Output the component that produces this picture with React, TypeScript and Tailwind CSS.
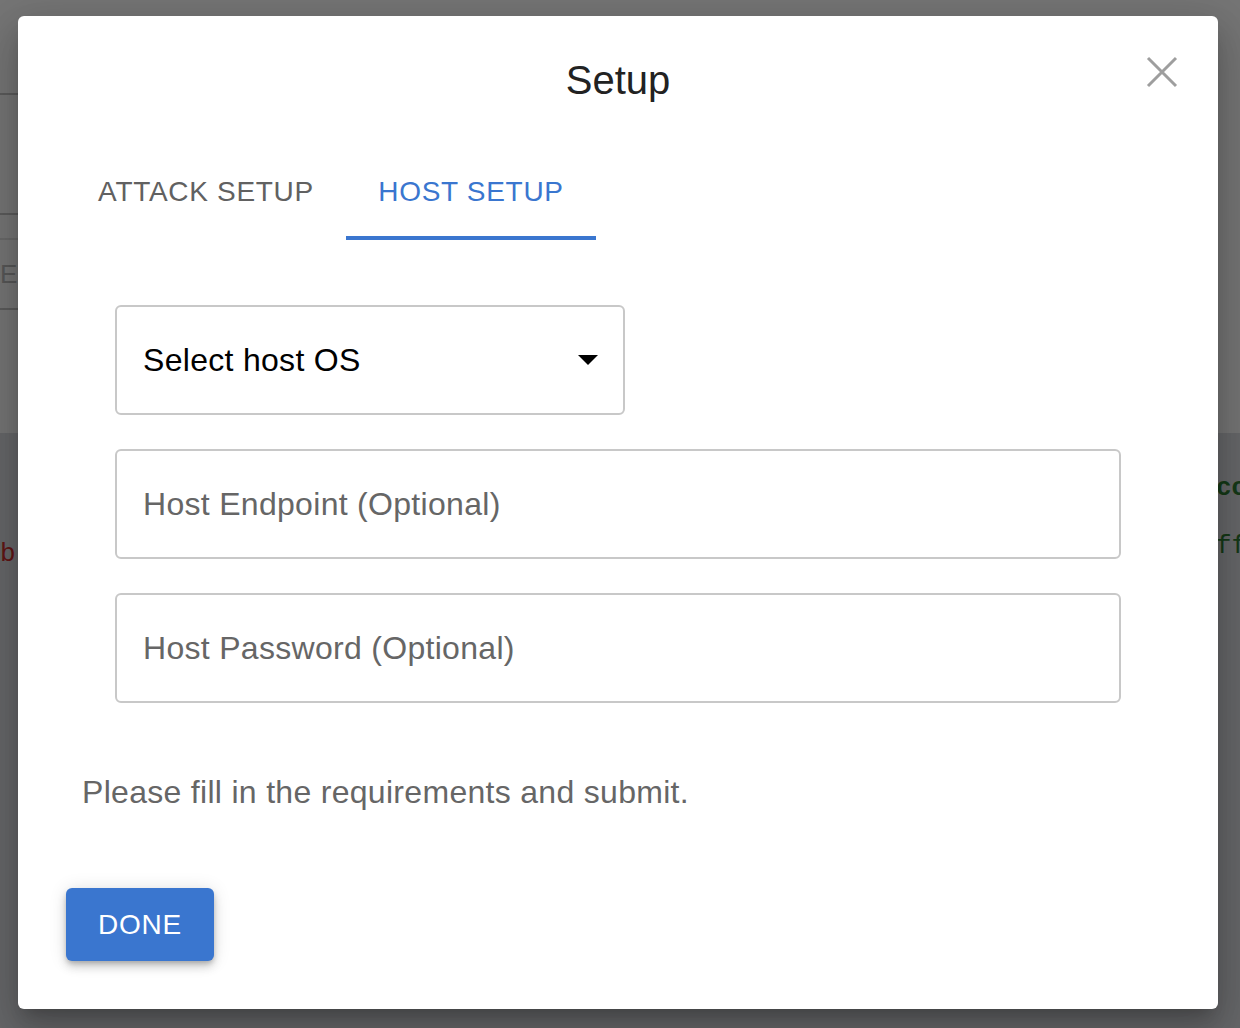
import { useState } from 'react'

const tabs = [
  { id: 'attack', label: 'ATTACK SETUP', width: 'w-[280px]' },
  { id: 'host', label: 'HOST SETUP', width: 'w-[250px]' },
]

const CloseIcon = () => (
  <svg width="40" height="40" viewBox="0 0 40 40" fill="none">
    <path d="M6 6 L34 34 M34 6 L6 34" stroke="#9e9e9e" strokeWidth="3" />
  </svg>
)

const BackgroundPage = () => (
  <div className="flex h-full flex-col">
    <div className="relative h-[433px] bg-white">
      <div className="w-[600px]">
        <div className="h-[95px] border-b-2 border-[#c6c6c6]" />
        <div className="h-[120px] border-b-2 border-[#c6c6c6]" />
        <div className="h-[25px] border-b-2 border-[#e4e4e4]" />
        <div className="flex h-[70px] items-center border-b-2 border-[#c6c6c6] text-[26px] text-[#bdbdbd]">
          <span>EN</span>
        </div>
      </div>
    </div>
    <div className="flex flex-1 justify-between bg-[#dfe0e5]">
      <div className="pt-[102px] font-['Liberation_Mono',monospace] text-[26px] text-[#d32f2f]">b</div>
      <div className="flex w-[24px] flex-col overflow-hidden pt-[40px] font-['Liberation_Mono',monospace] text-[26px] leading-[30px] text-[#2e7d32]">
        <span className="font-bold">co</span>
        <span className="mt-[28px]">ff</span>
      </div>
    </div>
  </div>
)

const OutlinedField = ({ placeholder }: { placeholder: string }) => (
  <div className="flex h-[110px] w-full items-center rounded-md border-2 border-[#c8c8c8] pl-[26px] text-[32px] tracking-[0.3px] text-[#666666]">
    {placeholder}
  </div>
)

export default function App() {
  const [activeTab, setActiveTab] = useState('host')

  return (
    <div className="relative h-screen w-full overflow-hidden font-['Liberation_Sans',Arial,sans-serif]">
      <BackgroundPage />
      <div className="absolute inset-0 bg-black/[0.54]" />

      <div className="absolute inset-0 flex items-start pl-[18px] pt-4">
        <div className="relative flex h-[993px] w-[1200px] flex-col rounded-md bg-white px-12 shadow-[0_11px_15px_-7px_rgba(0,0,0,0.2),0_24px_38px_3px_rgba(0,0,0,0.14),0_9px_46px_8px_rgba(0,0,0,0.12)]">
          <button className="absolute right-[36px] top-[36px]" aria-label="close">
            <CloseIcon />
          </button>

          <h2 className="mt-10 text-center text-[40px] leading-[48px] text-[#222222]">Setup</h2>

          <div className="mt-10 flex">
            {tabs.map(tab => {
              const active = tab.id === activeTab
              return (
                <button
                  key={tab.id}
                  onClick={() => setActiveTab(tab.id)}
                  className={`relative flex h-[96px] items-center justify-center text-[28px] tracking-[0.7px] ${tab.width} ${
                    active ? 'text-[#3a76cf]' : 'text-[#616161]'
                  }`}
                >
                  {tab.label}
                  {active && <span className="absolute bottom-0 left-0 h-1 w-full bg-[#3a76cf]" />}
                </button>
              )
            })}
          </div>

          <div className="mt-[65px] flex flex-col gap-[34px] px-[49px]">
            <div className="flex h-[110px] w-[510px] items-center justify-between rounded-md border-2 border-[#c8c8c8] pl-[26px] pr-[25px] text-[32px] tracking-[0.3px] text-black">
              <span>Select host OS</span>
              <svg width="20" height="10" viewBox="0 0 20 10">
                <path d="M0 0 L20 0 L10 10 Z" fill="#000" />
              </svg>
            </div>
            <OutlinedField placeholder="Host Endpoint (Optional)" />
            <OutlinedField placeholder="Host Password (Optional)" />
          </div>

          <p className="ml-[16px] mt-[71px] text-[32px] leading-[37px] tracking-[0.3px] text-[#666666]">
            Please fill in the requirements and submit.
          </p>

          <div className="mt-[77px]">
            <button className="h-[73px] w-[148px] rounded-md bg-[#3a76cf] text-[28px] tracking-[0.8px] text-white shadow-[0_3px_5px_-1px_rgba(0,0,0,0.2),0_6px_10px_0_rgba(0,0,0,0.14),0_1px_18px_0_rgba(0,0,0,0.12)]">
              DONE
            </button>
          </div>
        </div>
      </div>
    </div>
  )
}
